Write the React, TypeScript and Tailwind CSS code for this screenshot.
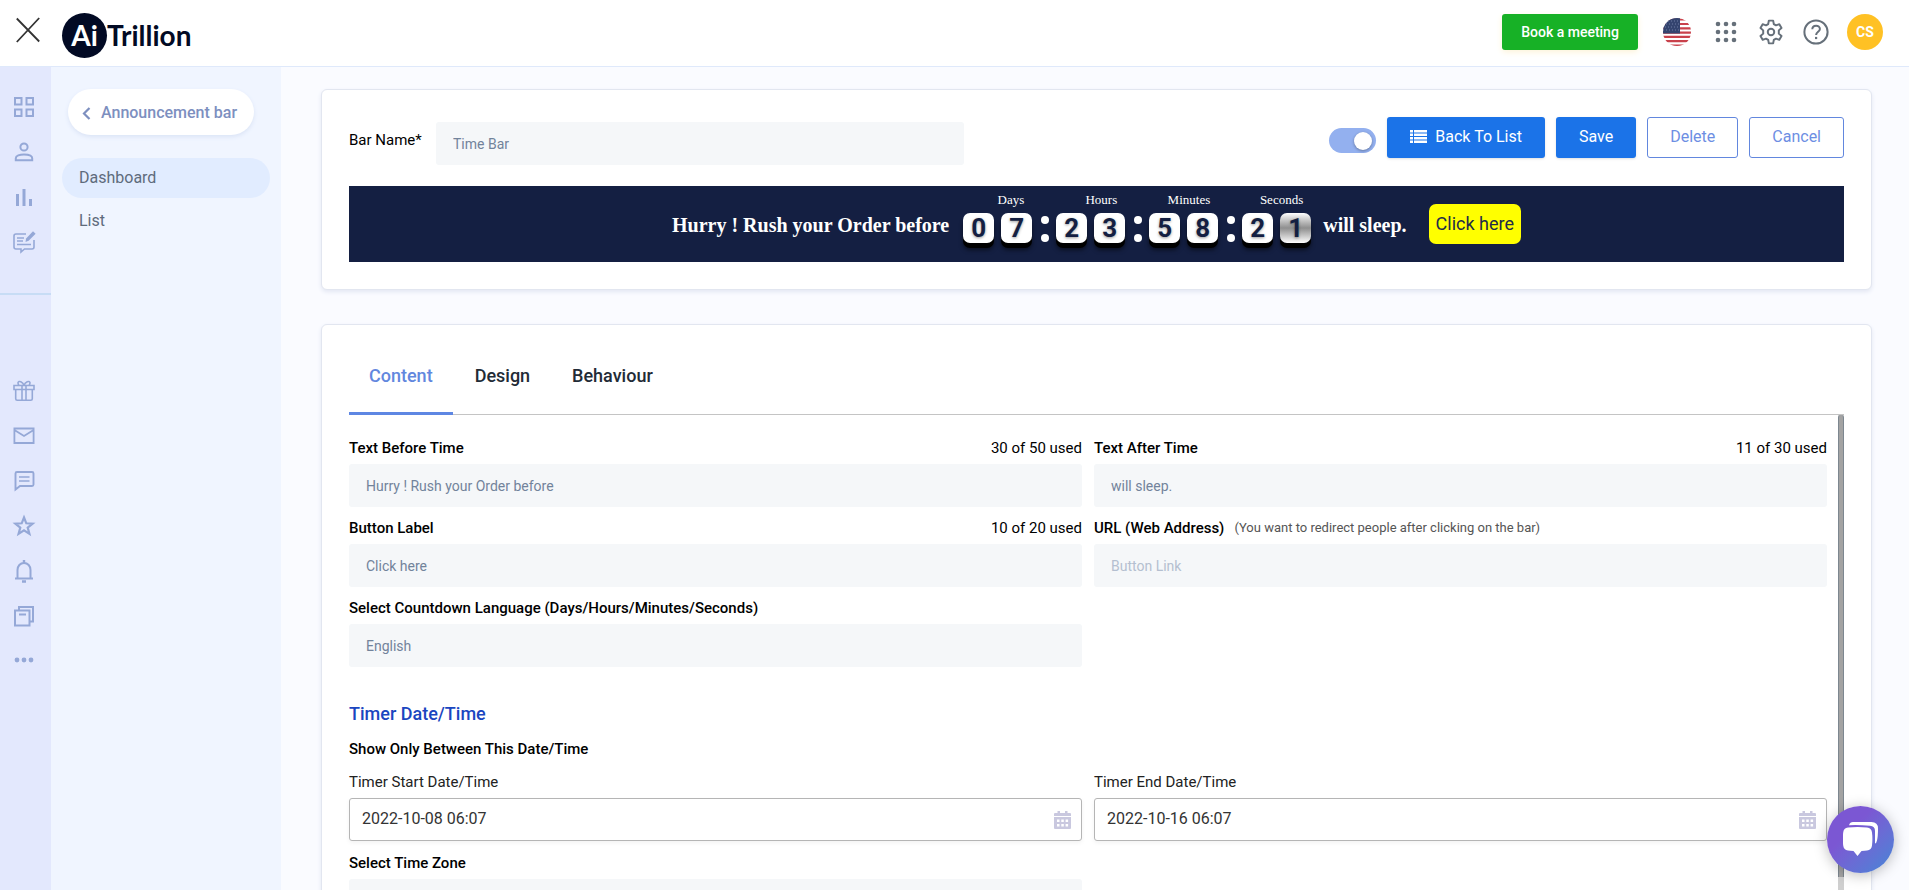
import { useState } from 'react'
import type { ReactNode } from 'react'

function Icon({ children }: { children: ReactNode }) {
  return (
    <svg viewBox="0 0 24 24" className="size-6" fill="none" stroke="currentColor" strokeWidth="2" aria-hidden="true">
      {children}
    </svg>
  )
}

const topNav = [
  {
    label: 'Dashboard',
    icon: (
      <Icon>
        <path d="M3 3h6.500v6.500H3zM14.500 3H21v6.500h-6.500zM3 14.500h6.500V21H3zM14.500 14.500H21V21h-6.500z" />
      </Icon>
    ),
  },
  {
    label: 'Customers',
    icon: (
      <Icon>
        <circle cx="12" cy="7" r="3.6" />
        <path d="M3.8 20.2v-2c0-2.4 3.8-3.8 8.2-3.8s8.2 1.4 8.2 3.8v2z" />
      </Icon>
    ),
  },
  {
    label: 'Reports',
    icon: (
      <Icon>
        <path d="M5.5 9v12M12 4v17M18.5 14v7" strokeWidth="3" />
      </Icon>
    ),
  },
  {
    label: 'Forms',
    icon: (
      <Icon>
        <path d="M14 4H4Q2 4 2 6v11q0 2 2 2h5v3l3.5-3H20q2 0 2-2v-7" strokeWidth="1.6" />
        <path d="M5 8h7M5 11h6M5 14.5h14" strokeWidth="1.4" />
        <path d="M13.5 12l.6-3.6L21 1.2l2.6 2.6-7 7z" fill="currentColor" stroke="none" />
      </Icon>
    ),
  },
]

const bottomNav = [
  {
    label: 'Loyalty',
    icon: (
      <Icon>
        <path d="M2 6.5h20v4H2zM3.7 10.5v9.3q0 1.5 1.5 1.5h13.6q1.5 0 1.5-1.5v-9.3M10 6.5v14.8M14 6.5v14.8" strokeWidth="1.6" />
        <path d="M12 6.5C11 3 6.5 1 6 3.7c0 1 .3 2 1 2.8M12 6.5c1-3.5 5.5-5.5 6-2.8 0 1-.3 2-1 2.8" strokeWidth="1.6" />
      </Icon>
    ),
  },
  {
    label: 'Email',
    icon: (
      <Icon>
        <path d="M2.4 4.5h19.2V19H2.400zM2.400 6l9.6 6 9.6-6" strokeWidth="1.8" />
      </Icon>
    ),
  },
  {
    label: 'Messages',
    icon: (
      <Icon>
        <path d="M3.500 20.500v-16Q3.500 3 5 3h15q1.500 0 1.500 1.500v11q0 1.500-1.500 1.500H8z" strokeWidth="1.9" />
        <path d="M7 8h10.500M7 12h10.500" strokeWidth="1.7" />
      </Icon>
    ),
  },
  {
    label: 'Reviews',
    icon: (
      <Icon>
        <path d="M12 3.5l2.3 5.8 6.3.3-4.9 4 1.7 6.2-5.4-3.5-5.4 3.5 1.7-6.200-4.900-4 6.300-.3z" strokeWidth="2.2" />
      </Icon>
    ),
  },
  {
    label: 'Notifications',
    icon: (
      <Icon>
        <path d="M3 19.500h18M5.500 19v-8c0-4 2.700-7 6.500-7s6.500 3 6.500 7v8" />
        <path d="M12 1v3M10 22.500h4" strokeWidth="2.4" />
      </Icon>
    ),
  },
  {
    label: 'Pages',
    icon: (
      <Icon>
        <path d="M3 6.500h14.500v15H3zM7 6.500V3h14v14.500h-3.500" />
        <path d="M7 10.500h7" />
      </Icon>
    ),
  },
  {
    label: 'More',
    icon: (
      <Icon>
        <g fill="currentColor" stroke="none">
          <circle cx="5" cy="11" r="2.4" />
          <circle cx="12" cy="11" r="2.4" />
          <circle cx="19" cy="11" r="2.4" />
        </g>
      </Icon>
    ),
  },
]

const units = [
  { label: 'Days', digits: ['0', '7'] },
  { label: 'Hours', digits: ['2', '3'] },
  { label: 'Minutes', digits: ['5', '8'] },
  { label: 'Seconds', digits: ['2', '1'] },
]

const tabs = ['Content', 'Design', 'Behaviour']

const fieldClass =
  'block h-[43px] w-full appearance-none rounded-[3px] bg-[#f5f7f9] px-[17px] text-sm text-[#72839b] outline-none placeholder:text-[#b4bfd0]'

function RailLink({ label, icon }: { label: string; icon: ReactNode }) {
  return (
    <a href="#" aria-label={label} className="flex h-[45px] w-[47px] items-center justify-center text-[#95a8d7]">
      {icon}
    </a>
  )
}

function Header() {
  return (
    <header className="flex h-[67px] shrink-0 items-center border-b border-[#dfe9fb] bg-white pr-[26px] pl-4">
      <button aria-label="Close menu" className="mb-1.5 text-[#333]">
        <svg viewBox="0 0 24 26" className="h-[26px] w-6" stroke="currentColor" strokeWidth="1.8" aria-hidden="true">
          <path d="M.8 1.5l22.4 23M23.200 1L.8 25" />
        </svg>
      </button>
      <a href="#" className="ml-[22px] flex items-center pt-1 font-['Lato',sans-serif] text-[28px] font-bold text-[#020a24]">
        <span className="flex size-[45px] items-center justify-center rounded-full bg-[#020a24] text-white">Ai</span>
        <span>Trillion</span>
      </a>

      <div className="ml-auto flex items-center pb-0.5">
        <button className="h-9 w-[136px] rounded-[3px] bg-[#17b126] text-sm font-medium text-white shadow-[0_2px_6px_#fdf3d8]">
          Book a meeting
        </button>
        <button aria-label="Language" className="ml-[25px]">
          <svg viewBox="0 0 28 28" className="size-7" aria-hidden="true">
            <clipPath id="flag"><circle cx="14" cy="14" r="14" /></clipPath>
            <g clipPath="url(#flag)">
              <rect width="28" height="28" fill="#fff" />
              <path d="M0 1.5h28M0 6h28M0 10.3h28M0 14.6h28M0 18.9h28M0 23.2h28M0 27.5h28" stroke="#c9414b" strokeWidth="2.2" />
              <rect width="17" height="15.5" fill="#34446f" />
              <path d="M2 3h15M0 6h17M2 9h15M0 12h17" stroke="#6f7da5" strokeWidth="1" strokeDasharray="1 2" />
            </g>
          </svg>
        </button>
        <button aria-label="Apps" className="ml-6 text-[#66707a]">
          <svg viewBox="0 0 22 22" className="size-[22px]" fill="currentColor" aria-hidden="true">
            {[3, 11, 19].map(y => [3, 11, 19].map(x => <circle key={`${x}-${y}`} cx={x} cy={y} r="2.3" />))}
          </svg>
        </button>
        <button aria-label="Settings" className="ml-[21px] text-[#66707a]">
          <svg viewBox="0 0 24 24" className="size-[26px]" fill="none" stroke="currentColor" strokeWidth="1.8" strokeLinejoin="round" aria-hidden="true">
            <path d="M10 1.500h4l.6 3.200 2 1.200 3.100-1.100 2 3.500-2.500 2.200v3l2.500 2.200-2 3.500-3.100-1.100-2 1.200-.6 3.200h-4l-.6-3.200-2-1.200-3.100 1.100-2-3.500 2.500-2.200v-3L2.300 8.300l2-3.500 3.100 1.100 2-1.200z" />
            <circle cx="12" cy="12" r="3" />
          </svg>
        </button>
        <button aria-label="Help" className="ml-[19px] text-[#66707a]">
          <svg viewBox="0 0 26 26" className="size-[26px]" fill="none" stroke="currentColor" strokeWidth="2" aria-hidden="true">
            <circle cx="13" cy="13" r="11.600" />
            <path d="M9.300 10.300c0-4.800 7.600-4.800 7.600-.3 0 2.700-3.800 2.900-3.800 6" />
            <path d="M12 19h2.200" strokeWidth="2.200" />
          </svg>
        </button>
        <button className="ml-[18px] size-9 rounded-full bg-[#ffc124] text-sm font-bold text-white">CS</button>
      </div>
    </header>
  )
}

function Countdown() {
  return (
    <div className="flex items-start text-white">
      {units.map((unit, i) => (
        <div key={unit.label} className="flex items-start">
          {i > 0 && (
            <div className="mt-[30px] mr-[7px] ml-[9px] flex flex-col gap-2.5">
              <span className="size-2 rounded-full bg-white" />
              <span className="size-2 rounded-full bg-white" />
            </div>
          )}
          <div>
            <div className="pt-1 pr-2 text-right font-['Liberation_Serif',serif] text-[13px] leading-5">{unit.label}</div>
            <div className="mt-[3px] flex gap-[7px]">
              {unit.digits.map((digit, j) => (
                <span
                  key={j}
                  className={`flex h-[30px] w-[31px] items-center justify-center rounded-[7px] text-[26px] leading-none font-bold text-[#141f42] shadow-[0_5px_0_#000,0_7px_4px_#0008] text-shadow-[0_1px_3px_#0006] ${
                    i === 3 && j === 1 ? 'bg-linear-to-b from-white via-[#8f8f8f] to-white' : 'bg-white'
                  }`}
                >
                  {digit}
                </span>
              ))}
            </div>
          </div>
        </div>
      ))}
    </div>
  )
}

function Field({ id, label, hint, used, children }: { id: string; label: string; hint?: string; used?: string; children: ReactNode }) {
  return (
    <div>
      <div className="mb-1.5 flex h-5 items-center text-[15px] leading-5 text-black">
        <label htmlFor={id} className="font-medium">{label}</label>
        {hint && <span className="ml-2.5 text-[13px] text-[#555]">{hint}</span>}
        {used && <span className="ml-auto">{used}</span>}
      </div>
      {children}
    </div>
  )
}

function DateField({ id, label, value }: { id: string; label: string; value: string }) {
  return (
    <div>
      <label htmlFor={id} className="mb-1.5 block text-[15px] leading-5 text-[#222]">{label}</label>
      <div className="flex h-[43px] items-center rounded-[3px] border border-[#b5b5b5] bg-white pr-2.5 pl-3 shadow-[0_2px_4px_#0000000d]">
        <input id={id} defaultValue={value} className="min-w-0 flex-1 pb-0.5 text-base text-[#333] outline-none" />
        <svg viewBox="0 0 17 18" className="h-[18px] w-[17px] text-[#c9c8df]" fill="currentColor" aria-hidden="true">
          <path d="M3.500 0H6v2h5V0h2.500v2H16q1 0 1 1v2H0V3q0-1 1-1h2.500zM0 6h17v11q0 1-1 1H1q-1 0-1-1z" />
          <path d="M3 8.500h2.500V11H3zM7.300 8.500h2.500V11H7.300zM11.600 8.500h2.500V11h-2.500zM3 13h2.500v2.500H3zM7.300 13h2.500v2.500H7.300zM11.600 13h2.500v2.500h-2.500z" fill="#fff" />
        </svg>
      </div>
    </div>
  )
}

export default function App() {
  const [enabled, setEnabled] = useState(true)
  const [activeTab, setActiveTab] = useState('Content')

  return (
    <div className="flex h-screen flex-col overflow-hidden bg-[#fafbff] font-['Roboto',sans-serif]">
      <Header />

      <div className="flex min-h-0 flex-1">
        <nav aria-label="Apps" className="w-[51px] shrink-0 bg-[#e3e8fd] pt-[17px]">
          <div className="border-b-2 border-[#c7dcf5] pb-[29px]">
            {topNav.map(item => <RailLink key={item.label} {...item} />)}
          </div>
          <div className="pt-[73px]">
            {bottomNav.map(item => <RailLink key={item.label} {...item} />)}
          </div>
        </nav>

        <aside className="w-[230px] shrink-0 bg-[#f0f5ff] px-[11px] pt-[22px]">
          <a href="#" className="ml-1.5 flex h-[46px] w-[186px] items-center rounded-full bg-white pt-0.5 pl-3.5 font-medium text-[#7d8fbf] shadow-[0_2px_4px_#dbe4f6]">
            <svg viewBox="0 0 9 13" className="mr-2.5 h-[13px] w-[9px]" fill="none" stroke="currentColor" strokeWidth="2.2" aria-hidden="true">
              <path d="M7.5 1L2 6.500l5.500 5.500" />
            </svg>
            Announcement bar
          </a>
          <div className="mt-[23px] flex flex-col gap-[3px] text-base text-[#5e6b7c]">
            <a href="#" className="flex h-10 items-center rounded-full bg-[#e1ecff] px-[17px]">Dashboard</a>
            <a href="#" className="flex h-10 items-center rounded-full px-[17px]">List</a>
          </div>
        </aside>

        <main className="min-w-0 flex-1 overflow-hidden pt-[22px] pr-[37px] pl-10">
          <section className="rounded-md border border-[#e2e6f0] bg-white p-[27px] shadow-[0_2px_4px_#e3e7f3]">
            <div className="flex items-start justify-between gap-6">
              <div className="flex min-w-0 flex-1 items-center pt-[5px]">
                <label htmlFor="bar-name" className="w-[87px] shrink-0 pb-1.5 text-[15px] text-black">Bar Name*</label>
                <input id="bar-name" defaultValue="Time Bar" className={`${fieldClass} max-w-[528px]`} />
              </div>
              <div className="flex items-center gap-[11px]">
                <input
                  type="checkbox"
                  role="switch"
                  aria-label="Bar enabled"
                  checked={enabled}
                  onChange={e => setEnabled(e.target.checked)}
                  className="mt-1.5 flex h-[25px] w-[47px] appearance-none items-center rounded-full bg-[#c5cbd8] px-1 before:size-[18px] before:rounded-full before:bg-white before:shadow-[0_1px_3px_#0005] checked:justify-end checked:bg-[#93b0ef]"
                />
                <button className="flex h-[41px] items-center rounded-[3px] bg-[#1b73e8] px-[23px] pb-0.5 text-base text-white shadow-sm">
                  <svg viewBox="0 0 17 13" className="mr-2 h-[13px] w-[17px]" fill="currentColor" aria-hidden="true">
                    <path d="M0 0h3v2.500H0zM4 0h13v2.500H4zM0 3.500h3V6H0zM4 3.500h13V6H4zM0 7h3v2.500H0zM4 7h13v2.500H4zM0 10.500h3V13H0zM4 10.500h13V13H4z" />
                  </svg>
                  Back To List
                </button>
                <button className="h-[41px] rounded-[3px] bg-[#1b73e8] px-[23px] pb-0.5 text-base text-white shadow-sm">Save</button>
                <button className="h-[41px] rounded-[3px] border border-[#6287de] px-[22px] pb-0.5 text-base text-[#6d8ee3]">Delete</button>
                <button className="h-[41px] rounded-[3px] border border-[#6287de] px-[22px] pb-0.5 text-base text-[#6d8ee3]">Cancel</button>
              </div>
            </div>

            <div className="mt-[21px] flex h-[76px] items-start justify-center bg-[#141f42]">
              <p className="mt-[25px] mr-3.5 font-['Liberation_Serif',serif] text-xl font-bold text-white">Hurry ! Rush your Order before</p>
              <Countdown />
              <p className="mt-[25px] mr-[22px] ml-3 font-['Liberation_Serif',serif] text-xl font-bold text-white">will sleep.</p>
              <a href="#" className="mt-[18px] flex h-10 items-center rounded-[7px] bg-[#ffff00] px-[7px] text-lg text-[#222b4a]">Click here</a>
            </div>
          </section>

          <section className="mt-[34px] rounded-md border border-[#e2e6f0] bg-white px-[27px] pt-[13px] pb-6 shadow-[0_2px_4px_#e3e7f3]">
            <div role="tablist" className="flex gap-0.5 border-b border-[#c4c4c4]">
              {tabs.map(tab => (
                <button
                  key={tab}
                  role="tab"
                  aria-selected={tab === activeTab}
                  onClick={() => setActiveTab(tab)}
                  className={`-mb-px h-[77px] border-b-3 px-5 pt-0.5 text-lg font-medium ${
                    tab === activeTab ? 'border-[#5e87e3] text-[#6287de]' : 'border-transparent text-[#222b36]'
                  }`}
                >
                  {tab}
                </button>
              ))}
            </div>

            <div className="flex">
              <div className="min-w-0 flex-1 pt-[23px]">
                <div className="grid grid-cols-2 gap-x-3 gap-y-[11px]">
                  <Field id="text-before" label="Text Before Time" used="30 of 50 used">
                    <input id="text-before" defaultValue="Hurry ! Rush your Order before" className={fieldClass} />
                  </Field>
                  <Field id="text-after" label="Text After Time" used="11 of 30 used">
                    <input id="text-after" defaultValue="will sleep." className={fieldClass} />
                  </Field>
                  <Field id="button-label" label="Button Label" used="10 of 20 used">
                    <input id="button-label" defaultValue="Click here" className={fieldClass} />
                  </Field>
                  <Field id="url" label="URL (Web Address)" hint="(You want to redirect people after clicking on the bar)">
                    <input id="url" placeholder="Button Link" className={fieldClass} />
                  </Field>
                  <Field id="language" label="Select Countdown Language (Days/Hours/Minutes/Seconds)">
                    <select id="language" className={fieldClass}>
                      <option>English</option>
                    </select>
                  </Field>
                </div>

                <h2 className="mt-[35px] text-lg leading-6 font-medium text-[#1a46c0]">Timer Date/Time</h2>
                <h3 className="mt-[13px] text-[15px] leading-5 font-medium text-black">Show Only Between This Date/Time</h3>

                <div className="mt-[13px] grid grid-cols-2 gap-3">
                  <DateField id="timer-start" label="Timer Start Date/Time" value="2022-10-08 06:07" />
                  <DateField id="timer-end" label="Timer End Date/Time" value="2022-10-16 06:07" />
                  <Field id="time-zone" label="Select Time Zone">
                    <select id="time-zone" className={fieldClass}>
                      <option>(GMT-05:00) Eastern Time</option>
                    </select>
                  </Field>
                </div>
              </div>
              <div className="ml-[11px] w-1.5 bg-[#cfcfcf]">
                <div className="h-[462px] rounded-t-full border-x border-[#7d8790] bg-[#a3a3a3]" />
              </div>
            </div>
          </section>
        </main>
      </div>

      <button
        aria-label="Open chat"
        className="fixed right-[15px] bottom-[17px] flex size-[67px] items-center justify-center rounded-full bg-linear-to-br from-[#7b57d3] from-35% to-[#3e86d6] shadow-[0_2px_14px_#0004]"
      >
        <svg viewBox="0 0 36 36" className="size-9" fill="#fff" aria-hidden="true">
          <path d="M6 3.200Q7 0 10 0h18.500Q35 0 35 6.500q0 8-1 12-.5 2.500-2 3V9q0-5-5-5.300Q16 2.800 6 3.200z" />
          <path d="M5 5.600q9.500-1.200 19 0 4.500.4 5 5 .8 6.400 0 13-.5 4.400-5 4.900-2 .3-5.500.4L14.500 34l-4-5.100Q7 28.800 5 28.500q-4.300-.5-4.800-4.900-.7-6.600 0-13 .4-4.600 4.800-5z" />
        </svg>
      </button>
    </div>
  )
}
